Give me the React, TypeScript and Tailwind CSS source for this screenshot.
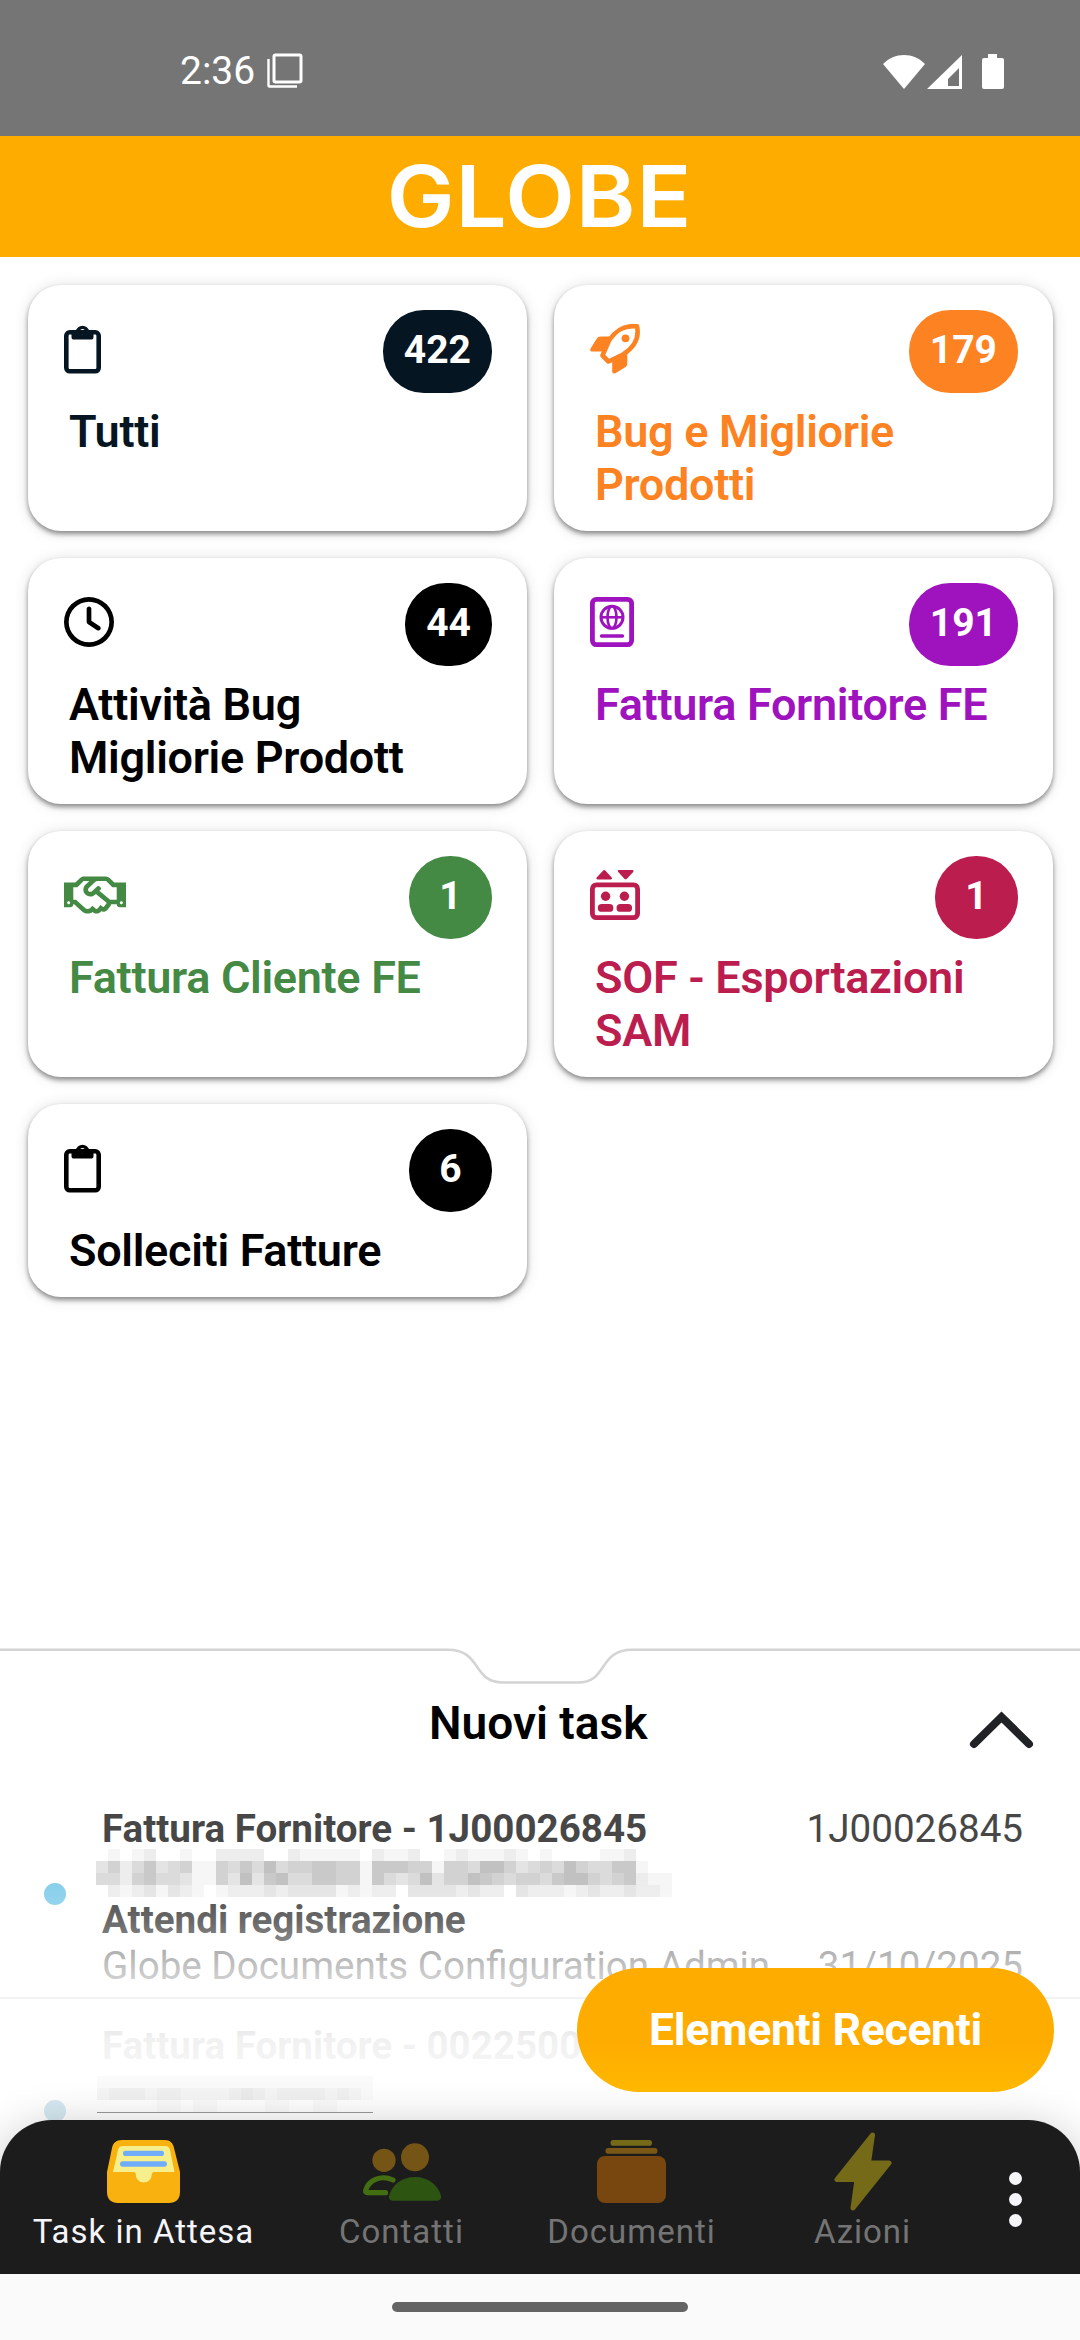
import type { ReactNode } from "react";
import { FaRegHandshake } from "react-icons/fa";
import { FaRegClock } from "react-icons/fa6";

const ClipboardIcon = () => (
  <svg width="37" height="50" viewBox="0 0 37 50">
    <rect
      x="2.300"
      y="8.300"
      width="32.400"
      height="39"
      rx="3.500"
      fill="none"
      stroke="currentColor"
      strokeWidth="4.600"
    />
    <path
      fillRule="evenodd"
      fill="currentColor"
      d="M7.500 8h4a7.100 7.500 0 0 1 14 0h4v5a2.600 2.600 0 0 1-2.600 2.600H10.100A2.600 2.600 0 0 1 7.500 13Zm11-3a2.600 2.600 0 1 0 0 5.200 2.600 2.600 0 0 0 0-5.200Z"
    />
  </svg>
);

const RocketIcon = () => (
  <svg width="50" height="50" viewBox="0 0 50 50">
    <path
      d="M47 2.400C34 .8 26 6 19 16.500L12.500 31.500l6 6L33 30.500C44 23.500 49.500 14 47 2.400Z"
      fill="none"
      stroke="currentColor"
      strokeWidth="4.600"
      strokeLinejoin="round"
    />
    <path
      d="M21 12.500H11C9 12.500 7.500 13.300 6.500 15L.6 24.500c-1 1.700 0 3.100 1.600 3.100H13ZM37.300 29v10c0 2-.8 3.500-2.500 4.500L25.300 49.200c-1.700 1-3.100 0-3.100-1.600V37Z"
      fill="currentColor"
    />
    <circle cx="35.500" cy="14.300" r="3.900" fill="currentColor" />
  </svg>
);

const PassportIcon = () => (
  <svg
    width="44"
    height="50"
    viewBox="0 0 44 50"
    fill="none"
    stroke="currentColor"
  >
    <rect x="2.400" y="2.400" width="39.200" height="45.200" rx="4" strokeWidth="4.800" />
    <circle cx="22" cy="20.300" r="11" strokeWidth="3" />
    <ellipse cx="22" cy="20.300" rx="4.500" ry="11" strokeWidth="2.600" />
    <path d="M11 20.300h22" strokeWidth="2.600" />
    <path d="M11.500 39h21" strokeWidth="3.400" strokeLinecap="round" />
  </svg>
);

const ElevatorIcon = () => (
  <svg width="50" height="50" viewBox="0 0 50 50" fill="currentColor">
    <rect
      x="2.400"
      y="14.900"
      width="45.200"
      height="32.700"
      rx="4"
      fill="none"
      stroke="currentColor"
      strokeWidth="4.800"
    />
    <path d="M7.500 9.400h13.400c1 0 1.500-1.100.8-1.900L15.500.7c-.7-.8-1.800-.8-2.500 0L6.700 7.500c-.7.800-.2 1.900.8 1.900ZM29 0h13.400c1 0 1.500 1.100.8 1.900l-6.300 6.800c-.7.800-1.800.8-2.500 0L28.200 1.900C27.500 1.100 28 0 29 0Z" />
    <circle cx="15.600" cy="26.300" r="4.700" />
    <circle cx="34.400" cy="26.300" r="4.700" />
    <rect x="7.800" y="34" width="15.600" height="7.800" rx="3.900" />
    <rect x="26.500" y="34" width="15.600" height="7.800" rx="3.900" />
  </svg>
);

const CARDS: { title: string; count: number; color: string; bg: string; icon: ReactNode }[] = [
  {
    title: "Tutti",
    count: 422,
    color: "text-[#051521]",
    bg: "bg-[#051521]",
    icon: <ClipboardIcon />,
  },
  {
    title: "Bug e Migliorie Prodotti",
    count: 179,
    color: "text-[#fd8222]",
    bg: "bg-[#fd8222]",
    icon: <RocketIcon />,
  },
  {
    title: "Attività Bug Migliorie Prodott",
    count: 44,
    color: "text-black",
    bg: "bg-black",
    icon: <FaRegClock className="w-[50px] h-[50px]" />,
  },
  {
    title: "Fattura Fornitore FE",
    count: 191,
    color: "text-[#9e13be]",
    bg: "bg-[#9e13be]",
    icon: <PassportIcon />,
  },
  {
    title: "Fattura Cliente FE",
    count: 1,
    color: "text-[#448944]",
    bg: "bg-[#448944]",
    icon: <FaRegHandshake className="w-[62px] h-[50px]" />,
  },
  {
    title: "SOF - Esportazioni SAM",
    count: 1,
    color: "text-[#bc1d4f]",
    bg: "bg-[#bc1d4f]",
    icon: <ElevatorIcon />,
  },
  {
    title: "Solleciti Fatture",
    count: 6,
    color: "text-black",
    bg: "bg-black",
    icon: <ClipboardIcon />,
  },
];

// Censored names, one digit per mosaic cell (0 = clear, 7 = darkest)
const MOSAIC_LONG = [
  "010120010022220021111102112001211121010000112000",
  "352463451154647455665516665515547753454754466100",
  "442564431153736744665516434735576545546775456211",
  "021231321012223233331212203333232203222123223221",
];
const MOSAIC_SHORT = [
  "11111111111111111111111",
  "23332332222343233332321",
  "00000110110000110011000",
];

function Mosaic({ rows, strength }: { rows: string[]; strength: number }) {
  return (
    <svg
      width={rows[0].length * 12}
      height={rows.length * 12}
      shapeRendering="crispEdges"
    >
      <rect width="100%" height="100%" fill="white" />
      {rows.map((row, y) =>
        row.split("").map((level, x) => (
          <rect
            key={`${x}-${y}`}
            x={x * 12}
            y={y * 12}
            width="12"
            height="12"
            fillOpacity={Number(level) * strength}
          />
        ))
      )}
    </svg>
  );
}

const InboxIcon = () => (
  <svg width="73" height="63" viewBox="0 0 73 63">
    <path
      d="M15 0h43c5 0 8 3 9 8l6 24v20c0 7-4 11-11 11H11C4 63 0 59 0 52V32L5 8c1-5 4-8 10-8Z"
      fill="#f9b10f"
    />
    <path
      d="M16 6h42c3 0 4.500 1.500 5 4l4.500 22H47c-1.500 0-2.200 1-2.200 2.500a8 8 0 0 1-16 0c0-1.500-.8-2.500-2.300-2.500H6l5-22c.5-2.500 2-4 5-4Z"
      fill="#f7ee8c"
    />
    <rect x="16" y="10.700" width="41" height="5.300" rx="2.600" fill="#6fadfb" />
    <rect x="13" y="21.300" width="47" height="5.400" rx="2.700" fill="#6fadfb" />
  </svg>
);

const ContactsIcon = () => (
  <svg width="80" height="63" viewBox="0 0 80 63">
    <circle cx="22" cy="20.300" r="11.600" fill="#745516" />
    <circle cx="53" cy="17.300" r="14" fill="#745516" />
    <path
      d="M31 40C19 34.500 7 40 3.800 50c-.6 1.900.3 2.700 1.700 2.700h18"
      fill="none"
      stroke="#436f12"
      strokeWidth="5.200"
      strokeLinecap="round"
      strokeLinejoin="round"
    />
    <path
      d="M53 37c13 0 23 8 26 18.500.8 3-1 5.200-3.800 5.200H31c-3 0-4.700-2.200-3.800-5.200C30 45 40 37 53 37Z"
      fill="#2d5411"
    />
  </svg>
);

const DocumentsIcon = () => (
  <svg width="69" height="63" viewBox="0 0 69 63">
    <rect x="13.500" width="41.500" height="5.700" rx="2.800" fill="#756a18" />
    <rect x="8.500" y="8" width="52" height="5.700" rx="2.800" fill="#7a5714" />
    <rect y="16" width="69" height="47" rx="8" fill="#77470f" />
  </svg>
);

const BoltIcon = () => (
  <svg width="58" height="79" viewBox="0 0 58 79">
    <path
      d="M38.500 3 3 47.500h20L19 76l36-45H34.500Z"
      fill="#756a18"
      stroke="#756a18"
      strokeWidth="5"
      strokeLinejoin="round"
    />
  </svg>
);

function StatusBar() {
  return (
    <div className="flex h-[136px] shrink-0 items-center bg-[#757575] pl-[180px] pr-[76px] pt-1.5 text-white">
      <span className="text-[39px] leading-none">2:36</span>
      <svg className="ml-3" width="36" height="36" viewBox="0 0 36 36" fill="none" stroke="white">
        <rect x="7" y="2" width="27" height="27" rx="1.500" strokeWidth="3" />
        <path d="M1.500 6v26.500a1 1 0 0 0 1 1H30" strokeWidth="2.400" />
      </svg>
      <svg className="ml-auto" width="121" height="37" viewBox="0 0 121 37" fill="white">
        <path d="M21 36 0 11C6 5 13 2 21 2s15 3 21 9Z" />
        <path fillRule="evenodd" d="M79 2v34H44Zm-3 13L65 26v7h11Z" />
        <path d="M105 1h9v4h5a2 2 0 0 1 2 2v27a2 2 0 0 1-2 2h-18a2 2 0 0 1-2-2V7a2 2 0 0 1 2-2h4Z" />
      </svg>
    </div>
  );
}

export default function App() {
  return (
    <div className="flex h-[2340px] w-[1080px] flex-col overflow-hidden bg-white font-['Roboto',sans-serif]">
      <StatusBar />
      <header className="flex h-[121px] shrink-0 items-center justify-center bg-[#ffac00]">
        <h1 className="scale-x-[1.065] font-['Inter',sans-serif] text-[85px] font-semibold leading-none tracking-[1px] text-white">
          GLOBE
        </h1>
      </header>

      {/* Task categories */}
      <main className="flex-1 px-7 pt-7">
        <div className="grid grid-cols-[499px_499px] gap-[27px]">
          {CARDS.map((card) => (
            <div
              key={card.title}
              className={`rounded-[33px] bg-white pt-[25px] pb-5 shadow-[0_3px_5px_rgba(0,0,0,0.42),0_1px_16px_rgba(0,0,0,0.12)] ${card.color}`}
            >
              <div className="flex justify-between pl-9 pr-[35px]">
                <div className="pt-3.5">{card.icon}</div>
                <span
                  className={`flex h-[83px] min-w-[83px] items-center justify-center rounded-[41px] px-[21px] pb-[3px] text-[39px] font-bold text-white ${card.bg}`}
                >
                  {card.count}
                </span>
              </div>
              <h2 className="mt-3 pl-[41px] pr-14 text-[45px] font-semibold leading-[53px] tracking-[-0.3px]">
                {card.title}
              </h2>
            </div>
          ))}
        </div>
      </main>

      {/* New tasks */}
      <section className="relative h-[472px] shrink-0">
        <svg className="block" width="1080" height="37" viewBox="0 0 1080 37" fill="none" stroke="#d4d4d4">
          <path
            d="M0 1.800H448C482 1.800 472 34.500 503 34.500H578C608 34.500 598 1.800 632 1.800H1080"
            strokeWidth="2.600"
          />
        </svg>
        <div className="flex h-[97px] items-start justify-between pl-[429px] pr-[46px] pt-[11px]">
          <h2 className="text-[46px] font-semibold leading-[54px]">Nuovi task</h2>
          <svg className="mt-[15px]" width="65" height="39" viewBox="0 0 65 39" fill="none">
            <path
              d="M5 33 32.500 6 60 33"
              stroke="#212226"
              strokeWidth="8"
              strokeLinecap="round"
            />
          </svg>
        </div>

        <div className="relative h-[338px] overflow-hidden text-[38.600px] leading-[45.700px] text-[#474747]">
          <div className="flex h-[217px] items-center border-b-2 border-[#d0d0d0] pl-11 pr-[57px]">
            <span className="mt-[9px] size-[22px] shrink-0 rounded-full bg-[#87ceeb]" />
            <div className="flex-1 pl-9 pt-4">
              <div className="flex justify-between">
                <span className="font-bold">Fattura Fornitore - 1J00026845</span>
                <span>1J00026845</span>
              </div>
              <div className="-ml-1.5 -mt-[3px] h-[48.700px]">
                <Mosaic rows={MOSAIC_LONG} strength={0.035} />
              </div>
              <p className="font-bold">Attendi registrazione</p>
              <div className="flex justify-between text-[#757575]">
                <span>Globe Documents Configuration Admin</span>
                <span>31/10/2025</span>
              </div>
            </div>
          </div>
          <div className="pl-[102px] pt-6 font-bold">Fattura Fornitore - 0022500</div>
          <div className="absolute inset-x-0 bottom-0 h-[240px] bg-[linear-gradient(rgba(255,255,255,0),rgba(255,255,255,0.18)_17%,rgba(255,255,255,0.64)_40%,rgba(255,255,255,0.92)_66%,white)]" />
          <div className="absolute bottom-[7px] left-[97px] h-[37px] border-b border-[#999]">
            <Mosaic rows={MOSAIC_SHORT} strength={0.02} />
          </div>
          <span className="absolute left-11 top-[318px] size-[22px] rounded-full bg-[#d5e8f1]" />
        </div>

        <button className="absolute right-[26px] top-80 z-10 h-[124px] w-[477px] rounded-full bg-linear-to-b from-[#ffac00] from-60% to-[#ffb800] text-[44.500px] font-bold tracking-[-0.300px] text-white">
          Elementi Recenti
        </button>
      </section>

      <nav className="relative flex h-[154px] shrink-0 rounded-t-[52px] bg-[#1c1c1c] text-[33px] tracking-[1px] text-[#747474] shadow-[0_8px_46px_rgba(0,0,0,0.24)]">
        <div className="flex w-[287px] flex-col items-center pt-5 text-[#f5f5fa]">
          <InboxIcon />
          <span className="mt-1 leading-[49px]">Task in Attesa</span>
        </div>
        <div className="flex w-[229px] flex-col items-center pt-5">
          <ContactsIcon />
          <span className="mt-1 leading-[49px]">Contatti</span>
        </div>
        <div className="flex w-[231px] flex-col items-center pt-5">
          <DocumentsIcon />
          <span className="mt-1 leading-[49px]">Documenti</span>
        </div>
        <div className="flex w-[231px] flex-col items-center pt-3">
          <BoltIcon />
          <span className="-mt-1 leading-[49px]">Azioni</span>
        </div>
        <div className="flex w-[75px] flex-col items-center gap-2 pt-[52px]">
          <span className="size-[13px] rounded-full bg-[#f5f5fa]" />
          <span className="size-[13px] rounded-full bg-[#f5f5fa]" />
          <span className="size-[13px] rounded-full bg-[#f5f5fa]" />
        </div>
      </nav>

      <div className="relative flex h-[66px] shrink-0 justify-center bg-[#fafafa] pt-7">
        <div className="h-2.5 w-[296px] rounded-full bg-[#646464]" />
      </div>
    </div>
  );
}
